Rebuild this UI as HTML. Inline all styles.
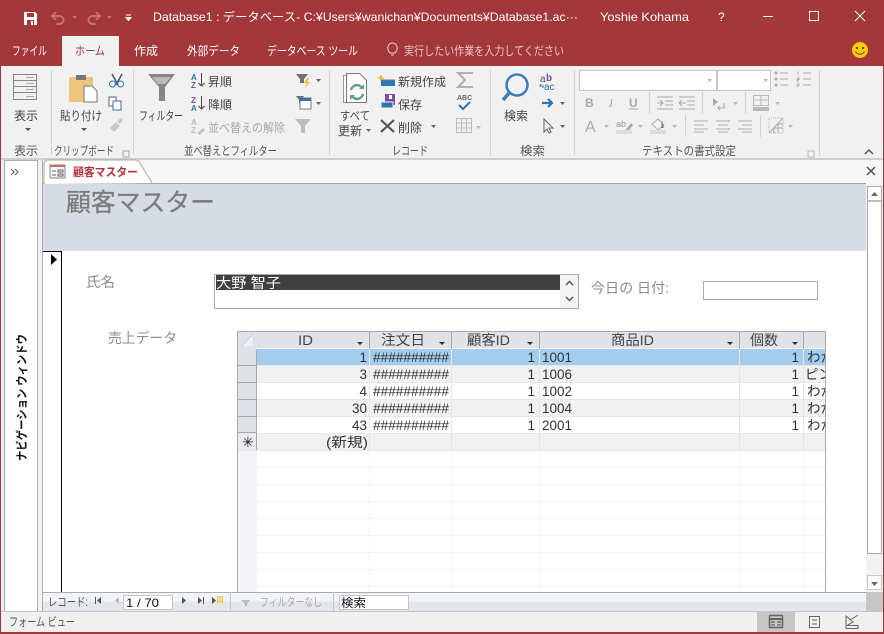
<!DOCTYPE html>
<html lang="ja"><head><meta charset="utf-8"><title>Database1</title>
<style>
html,body{margin:0;padding:0;width:884px;height:634px;overflow:hidden;background:#fff}
svg{display:block;position:absolute;left:0;top:0}
text{font-family:"Liberation Sans","Noto Sans CJK JP",sans-serif;font-size:12px;fill:#444}
.w{fill:#fff}
.g{fill:#a9a9a9}
.lab{fill:#555}
.t{fill:#8b8b8b;font-size:14px}
.c{fill:#333;font-size:13.500px}
.h{fill:#444;font-size:14px}
.f{fill:none;stroke:#a9a9a9}
</style></head><body>
<svg width="884" height="634" viewBox="0 0 884 634" xmlns="http://www.w3.org/2000/svg">
<defs>
<linearGradient id="nav" x1="0" y1="0" x2="0" y2="1"><stop offset="0" stop-color="#f3f4f7"/><stop offset=".5" stop-color="#f3f4f7"/><stop offset=".5" stop-color="#e4e6eb"/><stop offset="1" stop-color="#e4e6eb"/></linearGradient>
</defs>
<!-- window -->
<rect width="884" height="634" fill="#a4373a"/>
<rect x="1" y="66" width="882" height="565" fill="#f1f1f1"/>

<!-- title bar -->
<g fill="none">
<path d="M24 12h11l2 2v11H24z" fill="#fff"/><rect x="27" y="13" width="7" height="4" fill="#a4373a"/><rect x="27" y="20" width="7" height="5" fill="#a4373a"/><rect x="31" y="21" width="2" height="4" fill="#fff"/>
<path d="M56 12l-4 4 4 4M52.500 16h7a4 4 0 0 1 0 8h-3" stroke="#c27174" stroke-width="2"/>
<path d="M72 16h5l-2.500 3z" fill="#c27174"/>
<path d="M96 12l4 4-4 4M99.500 16h-7a4 4 0 0 0 0 8h3" stroke="#c27174" stroke-width="2"/>
<path d="M107 16h5l-2.500 3z" fill="#c27174"/>
<path d="M126 15h5M126 17.500h5l-2.500 3z" stroke="#fff" fill="#fff"/>
</g>
<text x="153" y="21" class="w" textLength="425" lengthAdjust="spacingAndGlyphs">Database1 : データベース- C:¥Users¥wanichan¥Documents¥Database1.ac···</text>
<text x="600" y="21" class="w" textLength="89" lengthAdjust="spacingAndGlyphs">Yoshie Kohama</text>
<text x="718" y="21" class="w" font-size="13">?</text>
<path d="M763 16.500h10" stroke="#fff"/><rect x="809.500" y="11.500" width="9" height="9" fill="none" stroke="#fff"/><path d="M855 11l10 10M865 11l-10 10" stroke="#fff"/>

<!-- tabs -->
<rect x="62" y="36" width="57" height="30" fill="#f1f1f1"/>
<text x="12" y="55" class="w" textLength="35" lengthAdjust="spacingAndGlyphs">ファイル</text>
<text x="75" y="55" style="fill:#a4373a" textLength="30" lengthAdjust="spacingAndGlyphs">ホーム</text>
<text x="134" y="55" class="w" textLength="24" lengthAdjust="spacingAndGlyphs">作成</text>
<text x="187" y="55" class="w" textLength="53" lengthAdjust="spacingAndGlyphs">外部データ</text>
<text x="267" y="55" class="w" textLength="91" lengthAdjust="spacingAndGlyphs">データベース ツール</text>
<path d="M390 53c-4-4-2-10 2.500-10s6.500 6 2.500 10zM391 55h3" fill="none" stroke="#e6cfcf"/>
<text x="404" y="55" style="fill:#e3c6c7" textLength="160" lengthAdjust="spacingAndGlyphs">実行したい作業を入力してください</text>
<circle cx="860" cy="50" r="8" fill="#fdc80d"/><circle cx="857" cy="48" r="1.100" fill="#5c4a00"/><circle cx="863" cy="48" r="1.100" fill="#5c4a00"/><path d="M855.500 51.500c2 3.500 7 3.500 9 0" fill="none" stroke="#5c4a00"/>

<!-- ribbon separators -->
<g fill="#d2d2d2">
<rect x="51" y="70" width="1" height="85"/><rect x="133" y="70" width="1" height="85"/><rect x="329" y="70" width="1" height="85"/><rect x="490" y="70" width="1" height="85"/><rect x="574" y="70" width="1" height="85"/><rect x="819" y="70" width="1" height="85"/>
</g>
<rect x="1" y="158" width="882" height="2" fill="#cfcfcf"/>

<!-- view -->
<g fill="none" stroke="#888"><rect x="13.500" y="74.500" width="23" height="25"/><path d="M14 80.500h22M14 86.500h22M14 92.500h22"/><path d="M26 77.500h8M26 83.500h8M26 89.500h8M26 96.500h8" stroke="#aaa"/></g>
<text x="14" y="120" textLength="24" lengthAdjust="spacingAndGlyphs">表示</text>
<path d="M25 128h6l-3 3z" fill="#555"/>
<text x="14" y="155" class="lab" textLength="24" lengthAdjust="spacingAndGlyphs">表示</text>

<!-- clipboard -->
<rect x="69" y="77" width="24" height="25" rx="1" fill="#edc57c"/><rect x="76" y="75" width="10" height="5" fill="#777"/>
<path d="M84 86h8l5 5v11H84z" fill="#fff" stroke="#777"/>
<text x="60" y="120" textLength="42" lengthAdjust="spacingAndGlyphs">貼り付け</text>
<path d="M81 128h6l-3 3z" fill="#555"/>
<path d="M112 74l6 11M122 74l-6 11" stroke="#555" stroke-width="1.500"/><circle cx="112.500" cy="84" r="3" fill="none" stroke="#2f74b5"/><circle cx="120.500" cy="84" r="3" fill="none" stroke="#2f74b5"/>
<path d="M109 97h7l0 9h-7z" fill="#fff" stroke="#666"/><path d="M113 101h8v9h-8z" fill="#fff" stroke="#3c6ea5"/>
<path d="M110 128l6-6 4 4-6 6zM117 121l4-3 2 2-3 4z" fill="#c9c9c9"/>
<text x="54" y="155" class="lab" textLength="60" lengthAdjust="spacingAndGlyphs">クリップボード</text>
<path d="M123 151h6v6h-6z" fill="none" stroke="#aaa"/>

<!-- sort filter -->
<path d="M148 74h27l-10 13v14h-6V87z" fill="#868686"/><path d="M152 77h19l-6 7h-7z" fill="#bbb"/>
<text x="139" y="120" textLength="44" lengthAdjust="spacingAndGlyphs">フィルター</text>
<text x="191" y="80" style="font-size:8px;fill:#2f74b5;font-weight:bold">A</text><text x="191" y="88" style="font-size:8px;fill:#7a4ea3;font-weight:bold">Z</text>
<path d="M201.500 73v13M198.500 83l3 3 3-3" fill="none" stroke="#444"/>
<text x="208" y="86" textLength="24" lengthAdjust="spacingAndGlyphs">昇順</text>
<text x="191" y="103" style="font-size:8px;fill:#7a4ea3;font-weight:bold">Z</text><text x="191" y="111" style="font-size:8px;fill:#2f74b5;font-weight:bold">A</text>
<path d="M201.500 96v13M198.500 106l3 3 3-3" fill="none" stroke="#444"/>
<text x="208" y="109" textLength="24" lengthAdjust="spacingAndGlyphs">降順</text>
<text x="191" y="125" style="font-size:8px;fill:#bbb;font-weight:bold">A</text><text x="191" y="133" style="font-size:8px;fill:#bbb;font-weight:bold">Z</text><path d="M197 133l6-5 2 2-5 5z" fill="#c4c4c4"/>
<text x="208" y="132" class="g" textLength="77" lengthAdjust="spacingAndGlyphs">並べ替えの解除</text>
<text x="184" y="155" class="lab" textLength="93" lengthAdjust="spacingAndGlyphs">並べ替えとフィルター</text>

<path d="M296 74h12l-4 5v4h-4v-4z" fill="#6f6f6f"/><path d="M307 78l-3 5h3l-2 5 5-6h-3l2-4z" fill="#eab93d"/><path d="M316 79h5l-2.500 3z" fill="#666"/>
<path d="M296 96h8l-3 4v3h-2v-3z" fill="#6f6f6f"/><rect x="300" y="98" width="11" height="11" fill="#fff" stroke="#777"/><rect x="300" y="98" width="11" height="3" fill="#2f74b5"/><path d="M316 102h5l-2.500 3z" fill="#666"/>
<path d="M295 119h16l-6 7v7h-4v-7z" fill="#bdbdbd"/>

<!-- records -->
<path d="M343.500 75.500h4v27h-4z" fill="#fff" stroke="#999"/><path d="M346.500 73.500h13l7 7v22h-20z" fill="#fff" stroke="#777"/>
<path d="M351 90a6 6 0 0 1 11-2" fill="none" stroke="#5fa083" stroke-width="2.500"/><path d="M363 94a6 6 0 0 1-11 2" fill="none" stroke="#5fa083" stroke-width="2.500"/><path d="M364 84v5h-5zM350 100v-5h5z" fill="#5fa083"/>
<text x="340" y="120" textLength="30" lengthAdjust="spacingAndGlyphs">すべて</text>
<text x="338" y="135" textLength="24" lengthAdjust="spacingAndGlyphs">更新</text><path d="M366 129h5l-2.500 3z" fill="#666"/>
<path d="M381 74l1 3 3 1-3 1-1 3-1-3-3-1 3-1z" fill="#e9b53a"/><rect x="381" y="80" width="14" height="6" fill="#2f74b5"/><path d="M381 80h14" stroke="#777"/>
<text x="398" y="86" textLength="48" lengthAdjust="spacingAndGlyphs">新規作成</text>
<rect x="385" y="94" width="10" height="11" fill="#7a4ea3"/><rect x="389" y="95" width="3" height="4" fill="#fff"/><rect x="381" y="102" width="12" height="6" fill="#2f74b5" stroke="#eee"/>
<text x="398" y="109" textLength="24" lengthAdjust="spacingAndGlyphs">保存</text>
<path d="M381 120l13 12M394 120l-13 12" stroke="#555" stroke-width="2.200"/>
<text x="398" y="132" textLength="24" lengthAdjust="spacingAndGlyphs">削除</text><path d="M431 125h5l-2.500 3z" fill="#666"/>
<path d="M473 73h-15l7 7-7 7h15" fill="none" stroke="#b0b0b0" stroke-width="2"/>
<text x="457" y="100" style="font-size:7px;font-weight:bold;fill:#666">ABC</text><path d="M459 105l4 4 7-7" fill="none" stroke="#2f74b5" stroke-width="2"/>
<g fill="none" stroke="#bdbdbd"><rect x="456.500" y="118.500" width="15" height="14"/><path d="M456 123h16M456 128h16M461.500 118v15M466.500 118v15"/></g><path d="M476 126h5l-2.500 3z" fill="#bbb"/>
<text x="392" y="155" class="lab" textLength="36" lengthAdjust="spacingAndGlyphs">レコード</text>

<!-- find -->
<circle cx="517" cy="85" r="10.500" fill="none" stroke="#3c7ebd" stroke-width="2.500"/><path d="M509 93l-6 7" stroke="#3c7ebd" stroke-width="3.500"/>
<text x="504" y="120" textLength="24" lengthAdjust="spacingAndGlyphs">検索</text>
<text x="540" y="82" style="font-size:10px;fill:#555">a</text><text x="546" y="81" style="font-size:10px;fill:#7a4ea3;font-weight:bold">b</text><path d="M541 84l-1 2h3v2" fill="none" stroke="#2f74b5"/><text x="544" y="90" style="font-size:10px;fill:#2f74b5">ac</text>
<path d="M542 103h9M548 99l4 4-4 4" fill="none" stroke="#2f74b5" stroke-width="2.200"/><path d="M560 102h5l-2.500 3z" fill="#666"/>
<path d="M544 119v13l3-3 2 4 2-1-2-4h4z" fill="#f4f4f4" stroke="#666"/><path d="M560 125h5l-2.500 3z" fill="#666"/>
<text x="520" y="155" class="lab" textLength="25" lengthAdjust="spacingAndGlyphs">検索</text>

<!-- text format -->
<rect x="579.500" y="70.500" width="137" height="20" fill="#fff" stroke="#c6c6c6"/><rect x="717.500" y="70.500" width="53" height="20" fill="#fff" stroke="#c6c6c6"/>
<path d="M707 79h5l-2.500 3zM763 79h5l-2.500 3z" fill="#bbb"/>
<g fill="none" stroke="#aaa"><path d="M780 73h8M780 79h8M780 85h8M803 73h8M803 79h8M803 85h8M798 71.500v3M797 78h2v1.500h-2v1.500h2M797 84h2v1.500h-2v1.500"/></g>
<g fill="#aaa"><circle cx="776" cy="73" r="1.500"/><circle cx="776" cy="79" r="1.500"/><circle cx="776" cy="85" r="1.500"/></g>
<text x="585" y="107" style="font-size:12px;font-weight:bold;fill:#aaa">B</text>
<text x="609" y="107" style="font-size:12px;font-style:italic;font-family:'Liberation Serif';fill:#aaa">I</text>
<text x="629" y="107" style="font-size:12px;font-weight:bold;fill:#aaa">U</text><path d="M629 109h9" stroke="#aaa"/>
<path d="M649.500 92v22M702.500 92v22M745.500 92v22M685.500 115v22M760.500 115v22" stroke="#d2d2d2" fill="none"/>
<g fill="none" stroke="#aaa"><path d="M657 97h16M665 101h8M665 105h8M657 109h16M657 103h6M660 100l3 3-3 3M679 97h16M687 101h8M687 105h8M679 109h16M679 103h7M682 100l-3 3 3 3"/></g>
<path d="M713 98l5 4-5 4z" fill="#aaa"/><path d="M724 103v5h-6M720 106l-2 2 2 2" fill="none" stroke="#aaa"/><path d="M733 102h5l-2.500 3z" fill="#bbb"/>
<g fill="none" stroke="#bbb"><rect x="753.500" y="95.500" width="15" height="10"/><path d="M753 100h16M761 95v11"/></g><rect x="753" y="107" width="16" height="4" fill="#bbb"/><path d="M775 102h5l-2.500 3z" fill="#bbb"/>
<text x="585" y="132" style="font-size:16px;fill:#aaa">A</text><path d="M604 125h5l-2.500 3z" fill="#bbb"/>
<text x="616" y="127" style="font-size:9px;fill:#999">ab</text><path d="M624 132l7-9 2 2-7 9z" fill="#aaa"/><rect x="616" y="130" width="16" height="4" fill="#dcdcdc"/><path d="M638 125h5l-2.500 3z" fill="#bbb"/>
<path d="M652 124l6-5 6 6-6 5z" fill="#f4f4f4" stroke="#aaa"/><path d="M662 120l2 8-3 0z" fill="#888"/><rect x="650" y="130" width="16" height="4" fill="#dcdcdc"/><path d="M672 125h5l-2.500 3z" fill="#bbb"/>
<g fill="none" stroke="#aaa"><path d="M694 121h14M694 125h10M694 129h14M694 132h10M716 121h14M718 125h10M716 129h14M718 132h10M738 121h14M742 125h10M738 129h14M742 132h10"/></g>
<path d="M769 118h14v15h-14z" fill="none" stroke="#bbb" stroke-dasharray="1 1"/><path d="M769 133l14-15M774 133v-5h9M778 133v-9h5" fill="none" stroke="#aaa"/><path d="M788 125h5l-2.500 3z" fill="#bbb"/>
<text x="642" y="155" class="lab" textLength="94" lengthAdjust="spacingAndGlyphs">テキストの書式設定</text>
<path d="M808 151h6v6h-6z" fill="none" stroke="#bbb"/>
<path d="M865 154l4-4 4 4" fill="none" stroke="#555" stroke-width="1.500"/>

<!-- body background -->
<rect x="1" y="160" width="882" height="452" fill="#f1f1f1"/>

<!-- nav pane -->
<rect x="4.500" y="160.500" width="33" height="451" fill="#fff" stroke="#a9adb3"/>
<rect x="38" y="160" width="5" height="452" fill="#f1f1f3"/>
<path d="M42.500 160v452" stroke="#a9adb3"/>
<path d="M11 169l3 3-3 3M15 169l3 3-3 3" fill="none" stroke="#666" stroke-width="1.200"/>
<text transform="translate(26,461) rotate(-90)" style="fill:#111;font-weight:bold;font-size:12px" textLength="127" lengthAdjust="spacingAndGlyphs">ナビゲーション ウィンドウ</text>

<!-- doc tabs -->
<rect x="43" y="160" width="840" height="24" fill="#f7f7f7"/>
<path d="M43 183.500h823" stroke="#a9a9a9"/>
<path d="M44 184v-20q0-4 4-4h87q3 0 5 3l12 20" fill="#fff" stroke="#b3a98f"/>
<rect x="50" y="165" width="15" height="13" fill="#f4f4f6" stroke="#888"/><rect x="50" y="165" width="15" height="2" fill="#c46a6e"/><path d="M52 171h4M52 175h4M58 170h5v2h-5zM58 174h5v2h-5z" stroke="#666" fill="none"/>
<text x="73" y="176" style="fill:#b0343a;font-weight:bold;font-size:11.500px" textLength="65" lengthAdjust="spacingAndGlyphs">顧客マスター</text>
<path d="M867 167l8 8M875 167l-8 8" stroke="#555" stroke-width="1.500"/>

<!-- form -->
<rect x="43" y="184" width="823" height="408" fill="#fff"/>
<rect x="43" y="184" width="823" height="67" fill="#d6dce5"/>
<text x="66" y="211" style="font-size:25px;fill:#7c7c7c;stroke:#7c7c7c;stroke-width:.3px" textLength="149" lengthAdjust="spacingAndGlyphs">顧客マスター</text>
<path d="M43 251.500h18.500V592" fill="none" stroke="#000"/>
<path d="M51 254l6 5.500-6 5.500z" fill="#000"/>
<text x="86" y="287" class="t" textLength="29" lengthAdjust="spacingAndGlyphs">氏名</text>
<text x="108" y="343" class="t" textLength="69" lengthAdjust="spacingAndGlyphs">売上データ</text>
<text x="591" y="293" class="t" textLength="78" lengthAdjust="spacingAndGlyphs">今日の 日付:</text>

<rect x="214.500" y="274.500" width="364" height="34" fill="#fff" stroke="#a9a9a9"/>
<rect x="216" y="275" width="344" height="15" fill="#404040"/>
<text x="216" y="288" class="w" style="font-size:14px" textLength="65" lengthAdjust="spacingAndGlyphs">大野 智子</text>
<rect x="560" y="275" width="18" height="33" fill="#f3f3f3"/>
<path d="M566 285l3.500-3.500 3.500 3.500M566 297l3.500 3.500 3.500-3.500" fill="none" stroke="#555" stroke-width="1.500"/>
<rect x="703.500" y="281.500" width="114" height="18" fill="#fff" stroke="#a9a9a9"/>

<!-- datasheet -->
<rect x="237.500" y="331.500" width="588" height="261" fill="#fff" stroke="#a9a9a9"/>
<rect x="238" y="332" width="587" height="16" fill="#dfe2e7"/>
<rect x="238" y="332" width="18" height="118" fill="#dfe2e7"/>
<rect x="238" y="451" width="19" height="141" fill="#f4f5fb"/>
<path d="M242 346l11-12v12z" fill="#eef0f3"/><path d="M242 346l11-12" stroke="#c5d2e4"/>
<!-- rows -->
<rect x="257" y="349" width="568" height="16" fill="#a2cdf0"/>
<rect x="257" y="366" width="568" height="16" fill="#f1f1f1"/>
<rect x="257" y="400" width="568" height="16" fill="#f1f1f1"/>
<rect x="238" y="433" width="587" height="17" fill="#f1f1f1"/>
<rect x="238" y="433" width="18" height="17" fill="#e9ebee"/>
<g stroke="#e6e6e6">
<path d="M257 365.500h568M257 382.500h568M257 399.500h568M257 416.500h568M238 433.500h587M238 450.500h587"/>
</g>
<g stroke="#f3f3f3"><path d="M238 467.500h587M238 484.500h587M238 501.500h587M238 518.500h587M238 535.500h587M238 552.500h587M238 569.500h587M238 586.500h587M256.500 451v141M369.500 451v141M451.500 451v141M539.500 451v141M739.500 451v141M803.500 451v141"/></g>
<g stroke="#e6e6e6"><path d="M369.500 349v102M451.500 349v102M539.500 349v102M739.500 349v102M803.500 349v102"/></g>
<path d="M369.500 332v17M451.500 332v17M539.500 332v17M739.500 332v17M803.500 332v17" stroke="#a9a9a9"/>
<path d="M238 365.500h19M238 382.500h19M238 399.500h19M238 416.500h19M238 432.500h19" stroke="#a9a9a9"/>
<path d="M256.500 349v101" stroke="#a9a9a9"/>
<text x="298" y="345" class="h" textLength="15" lengthAdjust="spacingAndGlyphs">ID</text>
<text x="381" y="345" class="h" textLength="44" lengthAdjust="spacingAndGlyphs">注文日</text>
<text x="467" y="345" class="h" textLength="43" lengthAdjust="spacingAndGlyphs">顧客ID</text>
<text x="611" y="345" class="h" textLength="43" lengthAdjust="spacingAndGlyphs">商品ID</text>
<text x="750" y="345" class="h" textLength="28" lengthAdjust="spacingAndGlyphs">個数</text>
<g fill="#333"><path d="M357 342h6l-3 3zM439 342h6l-3 3zM527 342h6l-3 3zM727 342h6l-3 3zM792 342h6l-3 3z"/></g>

<g>
<text x="367" y="362" text-anchor="end" class="c">1</text>
<text x="367" y="379" text-anchor="end" class="c">3</text>
<text x="367" y="396" text-anchor="end" class="c">4</text>
<text x="367" y="413" text-anchor="end" class="c">30</text>
<text x="367" y="430" text-anchor="end" class="c">43</text>
<text x="326" y="447" class="c" textLength="42" lengthAdjust="spacingAndGlyphs">(新規)</text>
<text x="373" y="362" class="c" textLength="76" lengthAdjust="spacingAndGlyphs">##########</text>
<text x="373" y="379" class="c" textLength="76" lengthAdjust="spacingAndGlyphs">##########</text>
<text x="373" y="396" class="c" textLength="76" lengthAdjust="spacingAndGlyphs">##########</text>
<text x="373" y="413" class="c" textLength="76" lengthAdjust="spacingAndGlyphs">##########</text>
<text x="373" y="430" class="c" textLength="76" lengthAdjust="spacingAndGlyphs">##########</text>
<text x="535" y="362" text-anchor="end" class="c">1</text>
<text x="535" y="379" text-anchor="end" class="c">1</text>
<text x="535" y="396" text-anchor="end" class="c">1</text>
<text x="535" y="413" text-anchor="end" class="c">1</text>
<text x="535" y="430" text-anchor="end" class="c">1</text>
<text x="542" y="362" class="c" textLength="30" lengthAdjust="spacingAndGlyphs">1001</text>
<text x="542" y="379" class="c" textLength="30" lengthAdjust="spacingAndGlyphs">1006</text>
<text x="542" y="396" class="c" textLength="30" lengthAdjust="spacingAndGlyphs">1002</text>
<text x="542" y="413" class="c" textLength="30" lengthAdjust="spacingAndGlyphs">1004</text>
<text x="542" y="430" class="c" textLength="30" lengthAdjust="spacingAndGlyphs">2001</text>
<text x="799" y="362" text-anchor="end" class="c">1</text>
<text x="799" y="379" text-anchor="end" class="c">1</text>
<text x="799" y="396" text-anchor="end" class="c">1</text>
<text x="799" y="413" text-anchor="end" class="c">1</text>
<text x="799" y="430" text-anchor="end" class="c">1</text>
</g>
<svg x="804" y="349" width="21" height="100">
<text x="3" y="13" class="c">わか</text>
<text x="1" y="30" class="c">ピン</text>
<text x="3" y="47" class="c">わか</text>
<text x="3" y="64" class="c">わか</text>
<text x="3" y="81" class="c">わか</text>
</svg>
<text x="242" y="447" style="fill:#222;font-size:14px">✳</text>

<!-- scrollbar -->
<rect x="866" y="184" width="17" height="408" fill="#f1f1f1"/>
<rect x="867.500" y="186.500" width="14" height="14" fill="#fff" stroke="#a9a9a9"/>
<path d="M871 196l3.500-4 3.500 4z" fill="#666"/>
<rect x="867.500" y="200.500" width="14" height="353" fill="#fff" stroke="#a9a9a9"/>
<rect x="868" y="200" width="13" height="2" fill="#bdbdbd"/>
<rect x="867.500" y="575.500" width="14" height="14" fill="#fff" stroke="#c6c6c6"/>
<path d="M871 582h7l-3.500 4z" fill="#666"/>

<!-- record nav -->
<rect x="43" y="592" width="823" height="19" fill="url(#nav)"/>
<path d="M43 592.500h823" stroke="#a9adb3"/>
<rect x="866" y="592" width="17" height="19" fill="#c6c6c6"/>
<text x="48" y="606" style="font-size:11.500px;fill:#555" textLength="40" lengthAdjust="spacingAndGlyphs">レコード:</text>
<g fill="#555"><path d="M95 597h1v7h-1zM101 597v7l-4-3.500z"/><path d="M119 597v7l-4-3.500z" fill="#bbb"/><path d="M182 597v7l4-3.500zM198 597v7l4-3.500zM203 597h1v7h-1zM212 597v7l4-3.500z"/></g>
<rect x="217" y="596" width="6" height="7" fill="#e8b93e"/><path d="M217 598h6M217 600h6M219 596v7M221 596v7" stroke="#fff" stroke-width=".6"/>
<rect x="123.500" y="595.500" width="49" height="14" fill="#fff" stroke="#c6c6c6"/>
<text x="126" y="607" style="font-size:12px;fill:#111" textLength="33" lengthAdjust="spacingAndGlyphs">1 / 70</text>
<path d="M230.500 592v19M333.500 592v19" stroke="#c6c6c6"/>
<path d="M241 600h9l-3 4v2h-2v-2z" fill="#bbb"/>
<text x="260" y="606" class="g" style="font-size:11.500px" textLength="62" lengthAdjust="spacingAndGlyphs">フィルターなし</text>
<rect x="339.500" y="595.500" width="69" height="14" fill="#fff" stroke="#c6c6c6"/>
<text x="341" y="607" style="fill:#111" textLength="25" lengthAdjust="spacingAndGlyphs">検索</text>

<!-- status -->
<rect x="1" y="611" width="882" height="21" fill="#f0f0f0"/>
<path d="M1 611.500h882" stroke="#c6c6c6"/>
<text x="9" y="626" style="fill:#555" textLength="66" lengthAdjust="spacingAndGlyphs">フォーム ビュー</text>
<rect x="757" y="612" width="38" height="20" fill="#c6c6c6"/>
<g fill="none" stroke="#666"><rect x="769.500" y="615.500" width="13" height="12" stroke-width="1.500"/><path d="M770 619h13" stroke-width="2"/><path d="M771 622h4M771 625h4M777 622h4M777 625h4" stroke-width="1.300"/></g>
<g fill="none" stroke="#666"><path d="M809 616.500h11M809 627.500h11M809.500 616v12M819.500 616v12M812 620h5M812 624h5"/></g>
<g fill="none" stroke="#666"><path d="M846 616v10l7-4zM846 628.500h12v-3h-12zM850 620l8-5" /></g>
<rect x="0" y="632" width="884" height="2" fill="#a4373a"/>
<rect x="0" y="66" width="1" height="568" fill="#a4373a"/><rect x="883" y="66" width="1" height="568" fill="#a4373a"/>
</svg>
</body></html>
